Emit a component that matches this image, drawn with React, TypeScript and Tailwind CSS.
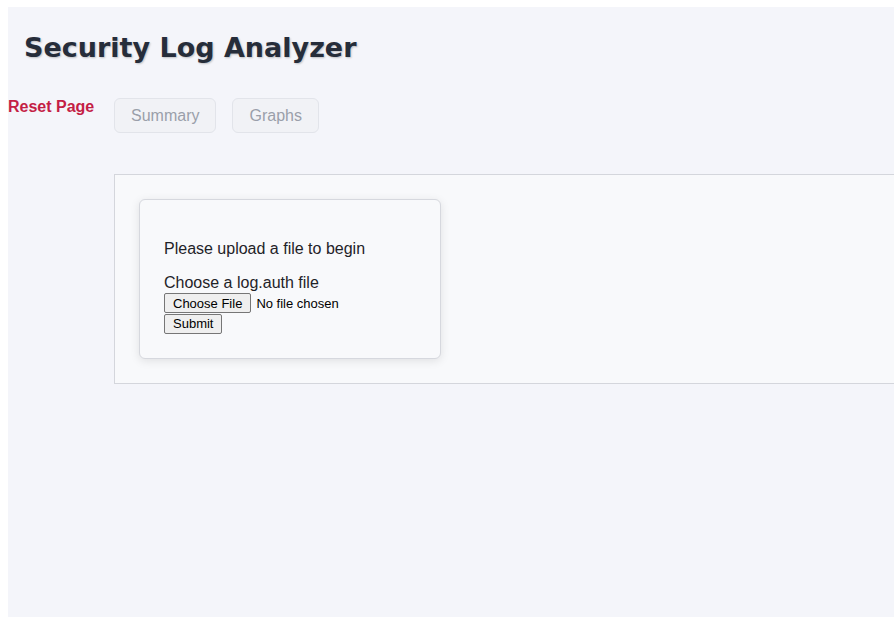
export default function App() {
  return (
    <div className="min-h-screen bg-white pt-[7px] pl-[8px] font-['Liberation_Sans',Arial,sans-serif]">
      <div className="h-[610px] bg-[#f4f5fa]">
        {/* Header */}
        <h1
          className="pl-[16px] pt-[24px] text-[27px] leading-[34px] font-bold text-[#262d3a] font-['DejaVu_Sans',Verdana,sans-serif] [text-shadow:1px_1px_2px_rgba(0,0,0,0.22)]"
        >
          Security Log Analyzer
        </h1>

        {/* Nav */}
        <div className="mt-[34px] flex items-start">
          <button className="w-[106px] text-left text-[16px] font-bold text-[#c41e45] leading-[18px] mt-[-1px]">
            Reset Page
          </button>
          <div className="flex gap-[16px] mt-[-1px]">
            <button className="h-[35px] px-[16px] rounded-md border border-[#e2e4ea] bg-[#f1f2f6] text-[16px] text-[#9a9faa]">
              Summary
            </button>
            <button className="h-[35px] px-[16px] rounded-md border border-[#e2e4ea] bg-[#f1f2f6] text-[16px] text-[#9a9faa]">
              Graphs
            </button>
          </div>
        </div>

        {/* Content */}
        <div className="mt-[41px] ml-[106px] border border-r-0 border-[#d4d6dc] bg-[#f8f9fb] p-[24px]">
          <div className="w-[302px] rounded-md border border-[#d6d8de] bg-[#f8f9fb] px-[24px] py-[24px] shadow-[0_2px_10px_rgba(0,0,0,0.10)] text-[#1f2328]">
            <p className="mt-[16px] text-[16px] leading-[18px]">Please upload a file to begin</p>
            <p className="mt-[16px] text-[16px] leading-[18px]">Choose a log.auth file</p>
            <div className="mt-px flex items-center text-[13px] leading-[15px] text-black">
              <span className="h-[20px] px-[8px] flex items-center border border-[#767676] rounded-[2px] bg-[#efefef]">
                Choose File
              </span>
              <span className="ml-[5px]">No file chosen</span>
            </div>
            <div className="mt-px flex">
              <span className="h-[20px] px-[8px] flex items-center border border-[#767676] rounded-[2px] bg-[#efefef] text-[13px] text-black">
                Submit
              </span>
            </div>
          </div>
        </div>
      </div>
    </div>
  )
}
